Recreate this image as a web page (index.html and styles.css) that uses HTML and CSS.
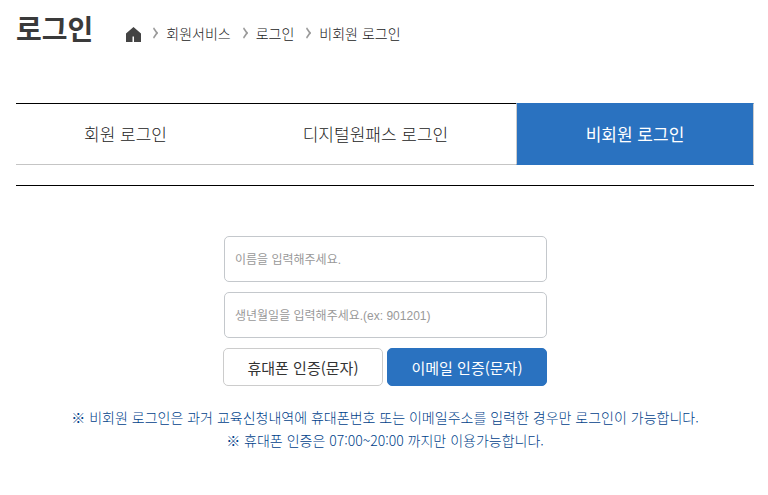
FILE: index.html
```html
<!DOCTYPE html>
<html lang="ko">
<head>
    <meta charset="UTF-8">
    <meta name="viewport" content="width=device-width, initial-scale=1.0">
    <title>비회원 로그인</title>
    <link rel="stylesheet" href="styles.css">
</head>
<body>
    <div class="container">
        <header class="page-header">
            <h1>로그인</h1>
            <nav class="breadcrumb">
                <a href="#" class="home" aria-label="홈">
                    <svg width="15" height="15" viewBox="0 0 15 15">
                        <path d="M7.5 0L0 6.5V15h6.5V9.5h1.5V15H15V6.5z" fill="#444"/>
                    </svg>
                </a>
                <a href="#">회원서비스</a>
                <a href="#">로그인</a>
                <a href="#">비회원 로그인</a>
            </nav>
        </header>

        <nav class="tabs">
            <a href="#">회원 로그인</a>
            <a href="#">디지털원패스 로그인</a>
            <a href="#" class="active">비회원 로그인</a>
        </nav>

        <main class="login-area">
            <form class="login-form">
                <input type="text" id="userName" aria-label="이름" placeholder="이름을 입력해주세요.">
                <input type="text" id="birthDate" aria-label="생년월일" placeholder="생년월일을 입력해주세요.(ex: 901201)">
                <div class="buttons">
                    <button type="button">휴대폰 인증(문자)</button>
                    <button type="button" class="primary">이메일 인증(문자)</button>
                </div>
            </form>
            <div class="notice">
                <p>※ 비회원 로그인은 과거 교육신청내역에 휴대폰번호 또는 이메일주소를 입력한 경우만 로그인이 가능합니다.</p>
                <p>※ 휴대폰 인증은 07:00~20:00 까지만 이용가능합니다.</p>
            </div>
        </main>
    </div>
</body>
</html>
```
FILE: styles.css
```css
* {
    box-sizing: border-box;
    margin: 0;
    padding: 0;
}

body {
    background-color: #fff;
    color: #222;
    font-family: "Noto Sans CJK KR", sans-serif;
    font-size: 14px;
    font-weight: 300;
}

a {
    color: inherit;
    text-decoration: none;
}

.container {
    padding: 8px 14px 0 16px;
}

.page-header {
    display: flex;
    align-items: center;
    gap: 33px;
    height: 40px;
}

h1 {
    color: #3a3a3a;
    font-size: 28px;
    line-height: 40px;
}

.breadcrumb {
    display: flex;
    align-items: center;
    padding-top: 10px;
    line-height: 20px;
}

.breadcrumb a + a::before {
    content: "";
    display: inline-block;
    width: 6px;
    height: 6px;
    margin: 0 8px 2px 9px;
    border: solid #999;
    border-width: 2px 2px 0 0;
    transform: scaleX(0.7) rotate(45deg);
}

.home svg {
    display: block;
    margin-top: 3px;
}

.tabs {
    display: grid;
    grid-template-columns: 219fr 281fr 238fr;
    margin-top: 55px;
}

.tabs a {
    height: 62px;
    border-top: 1px solid #000;
    border-bottom: 1px solid #c5c5c5;
    font-size: 17px;
    line-height: 60px;
    text-align: center;
}

.tabs .active {
    background-color: #2a72c0;
    border-color: #2a72c0;
    border-left: 1px solid #ccc;
    border-right: 1px solid #ccc;
    color: #fff;
    font-weight: 400;
}

.login-area {
    margin-top: 20px;
    padding-top: 50px;
    border-top: 1px solid #000;
}

.login-form {
    display: flex;
    flex-direction: column;
    gap: 10px;
    max-width: 324px;
    margin: 0 auto;
}

.login-form input {
    height: 46px;
    margin-left: 1px;
    padding: 2px 10px 0;
    border: 1px solid #c4c8cc;
    border-radius: 5px;
    font-family: "Liberation Sans", "Noto Sans CJK KR", sans-serif;
    font-size: 12px;
}

.login-form input::placeholder {
    color: #999;
}

.buttons {
    display: flex;
    gap: 4px;
}

.buttons button {
    flex: 1;
    height: 38px;
    background-color: #fff;
    border: 1px solid #ccc;
    border-radius: 5px;
    color: #333;
    font-family: inherit;
    font-size: 15px;
    cursor: pointer;
}

.buttons .primary {
    background-color: #2a72c0;
    border-color: #2a72c0;
    color: #fff;
}

.notice {
    margin-top: 20px;
    color: #003f8a;
    line-height: 23px;
    text-align: center;
}
```
